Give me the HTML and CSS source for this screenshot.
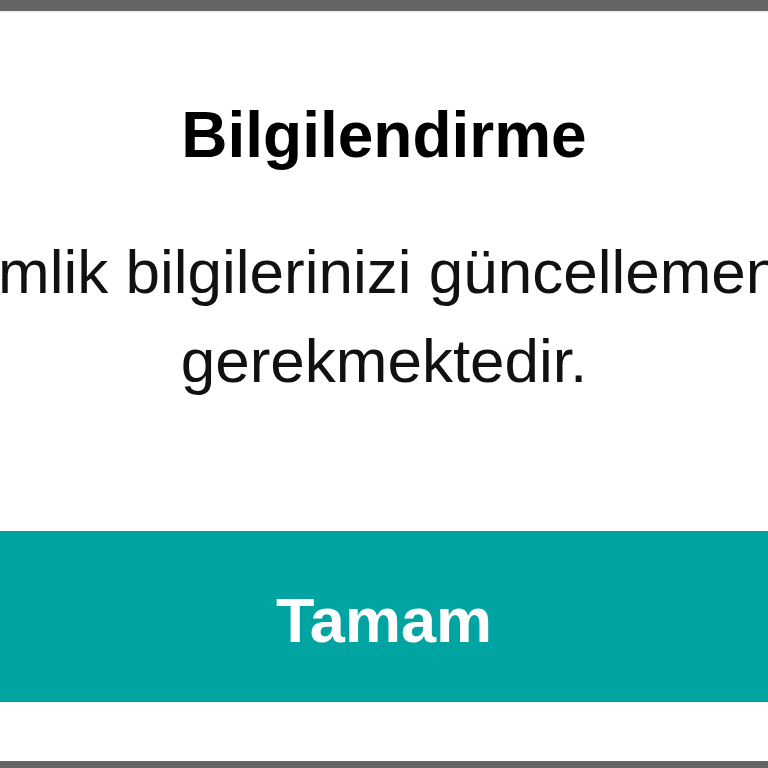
FILE: index.html
```html
<!DOCTYPE html>
<html lang="tr">
<head>
<meta charset="utf-8">
<title>Bilgilendirme</title>
<link rel="stylesheet" href="styles.css">
</head>
<body>
  <div class="dialog">
    <h1 class="title">Bilgilendirme</h1>
    <div class="message-wrap">
      <p class="message">Kimlik bilgilerinizi güncellemeniz gerekmektedir.</p>
    </div>
    <button class="ok">Tamam</button>
  </div>
</body>
</html>
```

FILE: styles.css
```css
html, body {
  margin: 0;
  padding: 0;
}
body {
  background: #656565;
  height: 768px;
  padding-top: 11px;
  box-sizing: border-box;
  overflow: hidden;
  font-family: "Liberation Sans", Arial, sans-serif;
}
.dialog {
  background: #ffffff;
  border-top: 2px solid #efefef;
  height: 750px;
  box-sizing: border-box;
  overflow: hidden;
  display: flex;
  flex-direction: column;
  padding-top: 86px;
}
.title {
  margin: 0;
  font-size: 64px;
  line-height: 72px;
  font-weight: bold;
  color: #000;
  text-align: center;
}
.message-wrap {
  display: flex;
  justify-content: center;
  margin-top: 56px;
}
.message {
  flex-shrink: 0;
  width: 900px;
  margin: 0;
  font-size: 62px;
  line-height: 89px;
  color: #111;
  text-align: center;
}
.ok {
  margin-top: 126px;
  height: 171px;
  box-sizing: border-box;
  border: none;
  border-bottom: 1px solid #0a8f8c;
  background: #02a4a2;
  color: #ffffff;
  font-family: "Liberation Sans", Arial, sans-serif;
  font-size: 63px;
  line-height: 72px;
  font-weight: bold;
  padding: 53px 0 45px;
  text-align: center;
}
```
